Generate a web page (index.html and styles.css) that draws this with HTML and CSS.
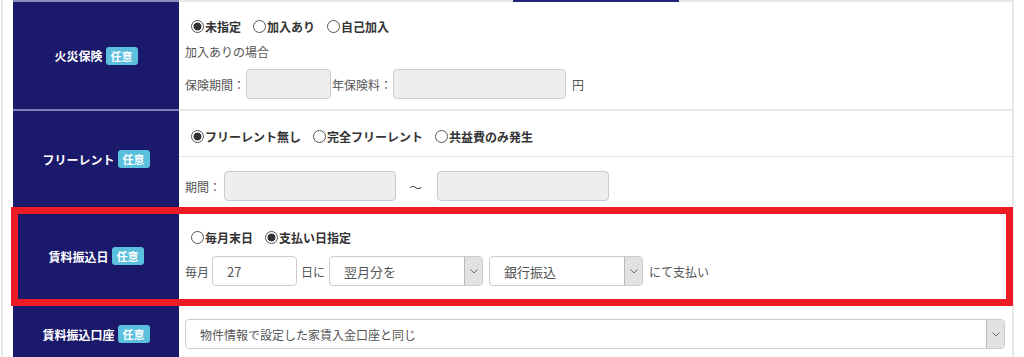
FILE: index.html
```html
<!DOCTYPE html>
<html lang="ja">
<head>
  <meta charset="UTF-8">
  <meta name="viewport" content="width=device-width, initial-scale=1.0">
  <title>契約条件</title>
  <link rel="stylesheet" href="styles.css">
</head>
<body>
  <div class="sheet">
    <div class="tab-line"></div>
    <div class="form">

      <div class="row first">
        <div class="label">火災保険<span class="badge">任意</span></div>
        <div class="field fire">
          <div class="radios">
            <label class="radio"><span class="dot on"></span>未指定</label>
            <label class="radio"><span class="dot"></span>加入あり</label>
            <label class="radio"><span class="dot"></span>自己加入</label>
          </div>
          <p class="note">加入ありの場合</p>
          <div class="line">
            保険期間：<input type="text" class="box w85" disabled>年保険料：<input type="text" class="box w173" disabled><span class="unit">円</span>
          </div>
        </div>
      </div>

      <div class="row">
        <div class="label">フリーレント<span class="badge">任意</span></div>
        <div class="field split">
          <div class="part top">
            <div class="radios">
              <label class="radio"><span class="dot on"></span>フリーレント無し</label>
              <label class="radio"><span class="dot"></span>完全フリーレント</label>
              <label class="radio"><span class="dot"></span>共益費のみ発生</label>
            </div>
          </div>
          <div class="part bottom">
            <div class="line">
              期間：<input type="text" class="box w172" disabled><span class="tilde">～</span><input type="text" class="box w172" disabled>
            </div>
          </div>
        </div>
      </div>

      <div class="row marked">
        <div class="label">賃料振込日<span class="badge">任意</span></div>
        <div class="field pay">
          <div class="radios">
            <label class="radio"><span class="dot"></span>毎月末日</label>
            <label class="radio"><span class="dot on"></span>支払い日指定</label>
          </div>
          <div class="line">
            毎月<input type="text" class="box white w85" value="27">日に<div class="select w154"><span>翌月分を</span><i class="arrow"><svg width="8" height="5" viewBox="0 0 8 5"><path d="M0.5 0.5 L4 4 L7.5 0.5" fill="none" stroke="#666" stroke-width="1"/></svg></i></div><div class="select w154"><span>銀行振込</span><i class="arrow"><svg width="8" height="5" viewBox="0 0 8 5"><path d="M0.5 0.5 L4 4 L7.5 0.5" fill="none" stroke="#666" stroke-width="1"/></svg></i></div><span class="unit">にて支払い</span>
          </div>
        </div>
      </div>

      <div class="row">
        <div class="label">賃料振込口座<span class="badge">任意</span></div>
        <div class="field account">
          <div class="select wide"><span>物件情報で設定した家賃入金口座と同じ</span><i class="arrow"><svg width="8" height="5" viewBox="0 0 8 5"><path d="M0.5 0.5 L4 4 L7.5 0.5" fill="none" stroke="#666" stroke-width="1"/></svg></i></div>
        </div>
      </div>

    </div>
  </div>
</body>
</html>
```

FILE: styles.css
```css
body {
  margin: 0;
  background: #fff;
  font-family: "Noto Sans CJK JP", "Noto Sans", sans-serif;
  font-size: 12px;
  color: #555;
}
.sheet {
  position: relative;
  width: 1001px;
  margin-left: 1px;
  padding-left: 10px;
  border-left: 2px solid #e8e8e8;
}
.tab-line {
  position: absolute;
  top: 0;
  left: 510px;
  width: 166px;
  height: 2px;
  background: #25237a;
}
.form {
  border-right: 2px solid #e8e8e8;
}
.row {
  display: grid;
  grid-template-columns: 166px 1fr;
}
.label {
  display: flex;
  justify-content: center;
  align-items: center;
  gap: 3px;
  background: #1b196b;
  color: #fff;
  font-weight: bold;
  font-size: 12px;
  border-bottom: 2px solid #7f7db4;
}
.field {
  border-bottom: 2px solid #e8e8e8;
  padding-left: 6px;
}
.row.first .label {
  border-top: 2px solid #8c8abd;
}
.row.first .field {
  border-top: 2px solid #e8e8e8;
}
.badge {
  background: #5bc0de;
  color: #fff;
  font-size: 11px;
  font-weight: bold;
  line-height: 18px;
  padding: 0 5px;
  border-radius: 3px;
}
.radios {
  display: flex;
  gap: 12px;
  height: 20px;
  align-items: center;
  padding-left: 6px;
}
.radio {
  display: flex;
  align-items: center;
  gap: 1px;
  font-size: 12px;
  font-weight: bold;
  color: #333;
}
.dot {
  width: 13px;
  height: 13px;
  box-sizing: border-box;
  border: 1px solid #555;
  border-radius: 50%;
  background: #fff;
}
.dot.on {
  background: radial-gradient(circle, #333 0 3.6px, #fff 4.3px);
}
.note {
  margin: 6px 0 0;
  line-height: 20px;
}
.line {
  display: flex;
  align-items: center;
  height: 30px;
}
.box {
  box-sizing: border-box;
  height: 30px;
  border: 1px solid #ccc;
  border-radius: 4px;
  background: #eee;
  font-family: inherit;
  font-size: 13px;
  color: #555;
  padding: 0 14px;
  margin: 0 1px;
}
.box.white {
  background: #fff;
  margin: 0 4px 0 3px;
}
.w85 { width: 85px; }
.w172 { width: 172px; }
.w173 { width: 173px; }
.w154 { width: 154px; }
.unit {
  margin-left: 5px;
}
.tilde {
  margin: 0 12px;
  font-size: 13px;
}
.fire {
  padding-top: 14px;
  padding-bottom: 10px;
}
.fire .line {
  margin-top: 7px;
}
.split {
  padding-left: 0;
}
.part.top {
  padding: 15px 0 10px 6px;
  border-bottom: 1px solid #e5e5e5;
}
.part.bottom {
  padding: 14px 0 6px 6px;
}
.part.bottom .box {
  margin-left: 3px;
}
.pay {
  padding-top: 18px;
  padding-bottom: 17px;
}
.pay .line {
  margin-top: 9px;
}
.pay .select {
  margin: 0 2px 0 4px;
}
.pay .unit {
  margin-left: 4px;
}
.select {
  box-sizing: border-box;
  display: flex;
  height: 30px;
  border: 1px solid #ccc;
  border-radius: 4px;
  background: #fff;
  overflow: hidden;
  font-size: 13px;
  color: #555;
}
.select span {
  flex: 1;
  display: flex;
  align-items: center;
  padding-left: 14px;
}
.select .arrow {
  width: 17px;
  display: flex;
  align-items: center;
  justify-content: center;
  background: #e2e2e2;
  border-left: 1px solid #bbb;
}
.account {
  padding-top: 14px;
  padding-bottom: 14px;
}
.select.wide {
  width: 820px;
  font-size: 12px;
}
.row.marked {
  position: relative;
}
.row.marked::after {
  content: "";
  position: absolute;
  left: -2px;
  right: -1px;
  top: -2px;
  bottom: -1px;
  border: 7px solid #ed1c24;
  pointer-events: none;
}
```
